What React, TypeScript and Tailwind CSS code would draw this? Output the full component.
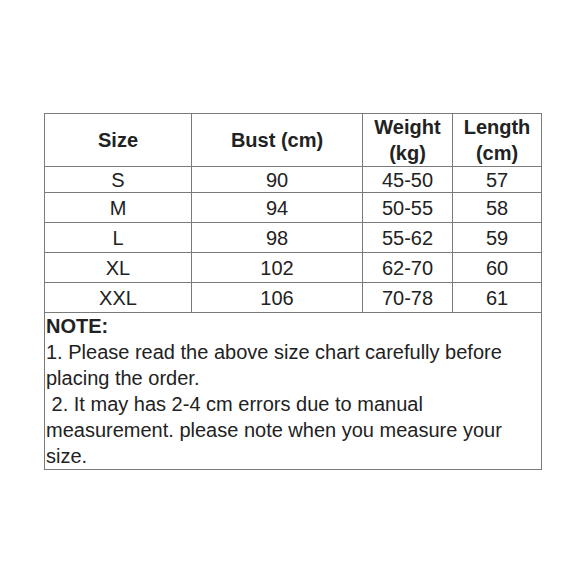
const rows = [
  ['S', '90', '45-50', '57'],
  ['M', '94', '50-55', '58'],
  ['L', '98', '55-62', '59'],
  ['XL', '102', '62-70', '60'],
  ['XXL', '106', '70-78', '61'],
];

export default function App() {
  return (
    <div className="min-h-[586px] w-[586px] bg-white pl-[44px] pt-[113px] font-['Liberation_Sans',Arial,sans-serif] text-[20px] text-[#222]">
      <table className="w-[497px] table-fixed border-collapse border border-[#7a7a7a]">
        <colgroup>
          <col className="w-[147px]" />
          <col className="w-[171px]" />
          <col className="w-[90px]" />
          <col className="w-[89px]" />
        </colgroup>
        <thead>
          <tr className="h-[52px]">
            <th className="border border-[#7a7a7a] p-0 text-center font-bold leading-[26px]">Size</th>
            <th className="border border-[#7a7a7a] p-0 text-center font-bold leading-[26px]">Bust (cm)</th>
            <th className="border border-[#7a7a7a] p-0 text-center font-bold leading-[26px]">
              Weight
              <br />
              (kg)
            </th>
            <th className="border border-[#7a7a7a] p-0 text-center font-bold leading-[26px]">
              Length
              <br />
              (cm)
            </th>
          </tr>
        </thead>
        <tbody>
          {rows.map((r, i) => (
            <tr key={r[0]} className={i === 0 ? 'h-[26px]' : 'h-[30px]'}>
              {r.map((c, j) => (
                <td key={j} className="border border-[#7a7a7a] p-0 text-center leading-[24px]">
                  {c}
                </td>
              ))}
            </tr>
          ))}
          <tr>
            <td colSpan={4} className="border border-[#7a7a7a] px-[1px] py-0 text-left leading-[26px]">
              <div className="font-bold">NOTE:</div>
              <div>1. Please read the above size chart carefully before placing the order.</div>
              <div className="whitespace-pre-wrap"> 2. It may has 2-4 cm errors due to manual measurement. please note when you measure your size.</div>
            </td>
          </tr>
        </tbody>
      </table>
    </div>
  );
}
